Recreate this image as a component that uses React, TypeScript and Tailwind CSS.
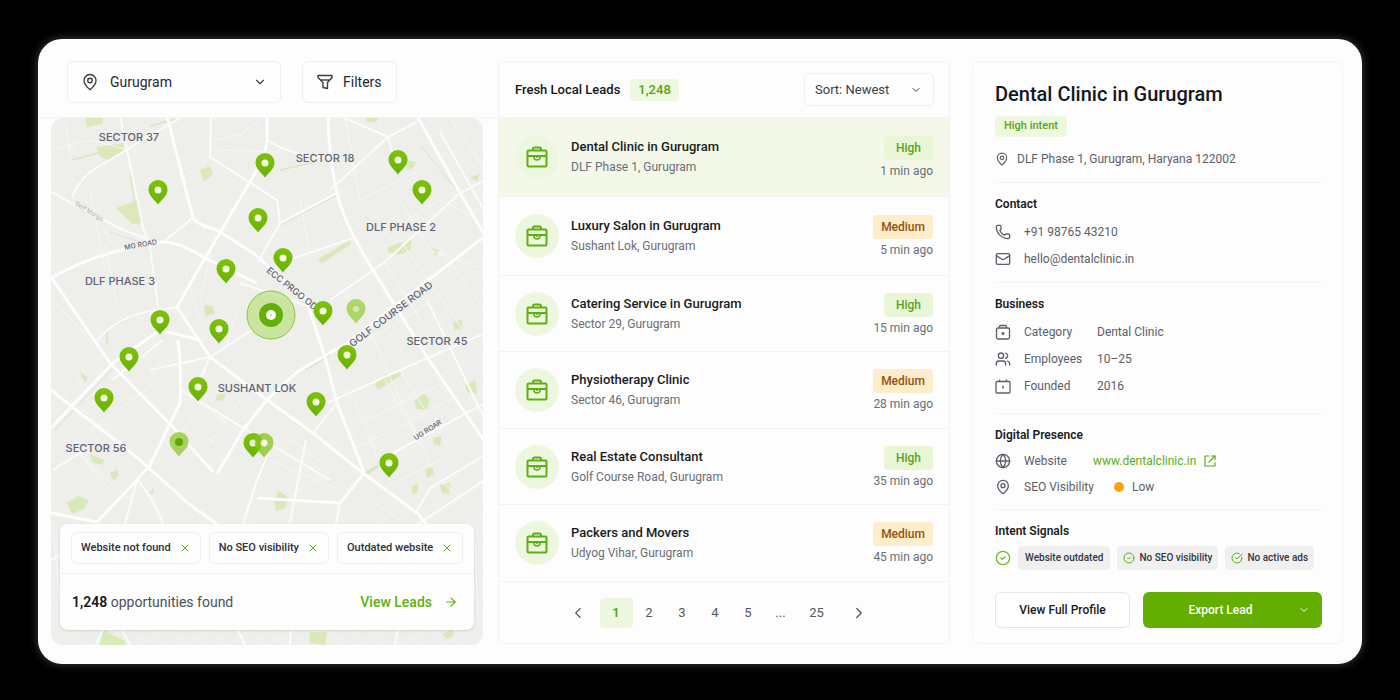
import React, { useState } from 'react';
import {
  ArrowRight,
  ChevronDown,
  ChevronLeft,
  ChevronRight,
  CircleCheck,
  CircleCheckBig,
  Globe,
  Mail,
  MapPin,
  Phone,
  Users,
  X,
} from 'lucide-react';

type Intent = 'High' | 'Medium';

interface Lead {
  name: string;
  place: string;
  intent: Intent;
  time: string;
}

const leads: Lead[] = [
  { name: 'Dental Clinic in Gurugram', place: 'DLF Phase 1, Gurugram', intent: 'High', time: '1 min ago' },
  { name: 'Luxury Salon in Gurugram', place: 'Sushant Lok, Gurugram', intent: 'Medium', time: '5 min ago' },
  { name: 'Catering Service in Gurugram', place: 'Sector 29, Gurugram', intent: 'High', time: '15 min ago' },
  { name: 'Physiotherapy Clinic', place: 'Sector 46, Gurugram', intent: 'Medium', time: '28 min ago' },
  { name: 'Real Estate Consultant', place: 'Golf Course Road, Gurugram', intent: 'High', time: '35 min ago' },
  { name: 'Packers and Movers', place: 'Udyog Vihar, Gurugram', intent: 'Medium', time: '45 min ago' },
];

const filters = ['Website not found', 'No SEO visibility', 'Outdated website'];

const majorRoads = [
  'M167 116 L193 218 Q196 224 217 230 L253 253 L306 299 L325 357 L337 403 L364 472',
  'M267 116 L267 140 Q266 152 258 168 L205 258 L177 307 L210 357 L267 400 L313 433 L363 473 L417 513 L440 540',
  'M51 278 Q100 250 163 242 Q180 242 203 257 L257 283',
  'M51 277 L110 363 L173 427 L213 472',
  'M51 428 L113 363 L160 330 L200 340',
  'M328 116 Q328 150 337 193 Q344 222 368 262 L427 357 L485 442',
  'M417 116 L460 193 L485 236',
  'M217 474 L243 430 L267 400 L297 372 L347 343 L485 236',
  'M51 513 L97 522 L137 480 L150 465 L180 403 Q182 370 178 340',
  'M51 390 L140 460 L190 505 L217 524',
  'M257 498 L340 503 L364 473',
];

const roads = [
  'M340 116 L388 137 L417 122',
  'M267 140 Q300 160 334 156',
  'M388 137 L394 160',
  'M258 262 L280 223 L337 193',
  'M280 223 L277 200 L210 157 L211 116',
  'M72 197 Q80 178 93 170 L183 116',
  'M51 192 L123 230 L150 240',
  'M120 116 L143 227 L150 247 L158 307',
  'M97 340 Q115 320 145 312 L177 307',
  'M327 403 L407 367 L485 333',
  'M393 453 L485 403',
  'M340 503 L336 524',
  'M417 511 L430 488 L485 455',
  'M270 450 L257 480 L243 524',
  'M306 440 L290 522',
  'M137 480 L125 524',
  'M137 480 Q155 500 163 524',
  'M330 480 L180 390',
  'M240 283 L320 310',
  'M163 340 L112 380',
  'M283 262 L353 238',
  'M210 357 L252 330',
  'M200 380 L210 357 L150 370',
  'M460 193 L485 180',
  'M193 218 L163 242',
  'M440 132 L485 212',
  'M388 137 L330 190',
  'M418 524 L485 480',
  'M313 433 L337 403',
  'M85 450 L53 470',
  'M460 193 L385 262 L330 300',
  'M427 300 L485 420',
  'M51 560 L120 524',
  'M96 645 L112 610 L130 645',
  'M228 610 L245 645',
  'M395 645 L400 620',
  'M290 645 L292 610',
];

const lanes = [
  'M51 150 L90 140 L130 150',
  'M65 118 L71 160',
  'M90 190 L105 270',
  'M105 245 L116 300',
  'M180 180 L220 150 L280 152',
  'M215 140 L240 135 L262 118',
  'M300 200 L310 255',
  'M345 118 L360 200',
  'M360 200 L420 170',
  'M375 240 L440 200 L470 215',
  'M385 262 L420 320',
  'M400 240 L470 340',
  'M330 360 L420 310',
  'M370 330 L400 400 L420 440',
  'M355 400 L378 460',
  'M385 380 L430 460',
  'M400 370 L450 450',
  'M345 430 L450 380',
  'M352 450 L460 395',
  'M70 400 L130 450',
  'M60 430 L110 490',
  'M90 430 L160 380',
  'M75 450 L130 500',
  'M195 400 L250 440',
  'M190 420 L240 470',
  'M205 450 L240 400',
  'M170 450 L210 390',
  'M280 430 L330 470',
  'M270 460 L340 490',
  'M380 490 L440 460',
  'M370 500 L400 520',
  'M440 480 L485 520',
  'M400 200 L430 250 L485 270',
  'M440 250 L485 310',
  'M450 118 L485 170',
  'M53 300 L90 340',
  'M53 350 L90 390',
  'M140 330 L180 370',
  'M240 300 L225 350',
  'M185 270 L200 320',
  'M215 235 L200 300',
  'M54 540 L60 600',
  'M475 540 L478 620',
];

// Parks and green strips
const parks = [
  'M85 118 L103 118 L102 124 L87 127 Z',
  'M96 147 L124 143 L122 152 L109 160 L99 156 Z',
  'M116 208 L137 200 L142 223 L132 224 Z',
  'M318 259 L350 240 L351 244 L322 263 Z',
  'M200 170 L210 166 L213 174 L204 182 Z',
  'M388 247 L400 243 L412 240 L410 250 L400 255 L388 252 Z',
  'M375 384 L385 375 L402 372 L400 376 L378 390 Z',
  'M414 401 L424 394 L430 400 L426 410 L416 409 Z',
  'M204 305 L213 306 L215 314 L205 316 Z',
  'M67 503 L78 496 L89 500 L84 509 L72 514 Z',
  'M90 454 L104 460 L102 465 L92 462 Z',
  'M110 473 L117 469 L119 476 L113 480 Z',
  'M274 500 L279 491 L289 498 L285 508 L276 511 Z',
  'M310 632 L327 632 L325 645 L309 643 Z',
  'M442 634 L452 630 L454 636 L447 639 Z',
  'M465 385 L475 380 L477 394 L467 392 Z',
  'M217 395 L226 393 L223 401 L216 400 Z',
  'M80 372 L88 378 L85 383 Z',
  'M453 322 L462 320 L463 329 L455 330 Z',
  'M412 486 L418 483 L418 492 L412 494 Z',
  'M425 470 L432 467 L434 475 L427 478 Z',
  'M440 485 L450 483 L449 494 L442 493 Z',
  'M433 438 L442 436 L440 446 L434 444 Z',
  'M365 118 L379 118 L376 122 L367 122 Z',
  'M470 178 L479 174 L478 182 Z',
  'M431 248 L439 250 L436 256 Z',
  'M148 495 L153 488 L154 492 Z',
  'M365 472 L378 464 L379 467 L367 475 Z',
  'M406 160 L416 162 L413 168 L407 170 Z',
  'M103 630 L125 641 L125 645 L100 645 Z',
];

const pins = [
  [265, 163], [398, 160], [422, 190], [158, 190], [258, 218], [226, 269], [283, 258],
  [160, 320], [219, 329], [323, 311], [347, 355], [129, 357], [104, 398], [198, 387],
  [316, 402], [253, 443], [389, 463],
];

const pinPath = 'M0 14.5 C-3 10 -9.500 6 -9.500 -0.500 A9.500 9.500 0 0 1 9.500 -0.500 C9.500 6 3 10 0 14.500 Z';

const areas = [
  { name: 'SECTOR 37', x: 129, y: 141 },
  { name: 'SECTOR 18', x: 325, y: 162 },
  { name: 'DLF PHASE 2', x: 401, y: 231 },
  { name: 'DLF PHASE 3', x: 120, y: 285 },
  { name: 'SECTOR 45', x: 437, y: 345 },
  { name: 'SUSHANT LOK', x: 257, y: 392 },
  { name: 'SECTOR 56', x: 96, y: 452 },
];

const CityMap = () => (
  <svg
    className="absolute inset-0 h-full w-full"
    viewBox="51 118 432 527"
    preserveAspectRatio="xMidYMid slice"
    role="img"
    aria-label="Map of Gurugram"
  >
    <defs>
      <linearGradient id="pin" x1="0" y1="0" x2="0" y2="1">
        <stop offset="0" stopColor="#7dc308" />
        <stop offset="1" stopColor="#6ab203" />
      </linearGradient>
      <pattern id="blocks" width="17" height="23" patternUnits="userSpaceOnUse" patternTransform="rotate(-32)">
        <path d="M0 0 H17 M0 0 V23" stroke="#fff" strokeWidth="1" fill="none" />
      </pattern>
    </defs>
    <rect x="51" y="118" width="432" height="527" fill="#eeeeeb" />
    <rect x="51" y="118" width="432" height="527" fill="url(#blocks)" opacity="0.25" />
    <g fill="#d5e8b0" opacity="0.85">
      {parks.map((d) => (
        <path key={d} d={d} />
      ))}
    </g>
    <g fill="none" stroke="#d9e8bf" strokeWidth="1.5">
      <path d="M72 160 L110 150 M130 172 L138 225 M107 345 L107 330 L133 316 M150 126 L180 118 M280 170 L316 162 M305 370 L330 355" />
    </g>
    <g fill="none" stroke="#dededb" strokeWidth="1">
      <path d="M281 225 L337 195 M332 160 L338 194 M110 232 L140 242 M420 145 L462 196 M55 430 L112 369" />
    </g>
    <g fill="none" stroke="#f7f7f6" strokeWidth="1" strokeLinejoin="round">
      {lanes.map((d) => (
        <path key={d} d={d} />
      ))}
    </g>
    <g fill="none" stroke="#fbfbfa" strokeWidth="2" strokeLinejoin="round">
      {roads.map((d) => (
        <path key={d} d={d} />
      ))}
    </g>
    <g fill="none" stroke="#fdfdfd" strokeWidth="3" strokeLinejoin="round">
      {majorRoads.map((d) => (
        <path key={d} d={d} />
      ))}
    </g>

    <g fontFamily="Inter, 'Liberation Sans', sans-serif" fontSize="11" fontWeight="500" fill="#5f6474" textAnchor="middle">
      {areas.map((a) => (
        <text key={a.name} x={a.x} y={a.y}>
          {a.name}
        </text>
      ))}
      <text transform="translate(393 317) rotate(-37)" fontSize="10">GOLF COURSE ROAD</text>
      <text transform="translate(290 291) rotate(39)" fontSize="9">ECC PRGO OD</text>
      <text transform="translate(141 247) rotate(-10)" fontSize="7">MG ROAD</text>
      <text transform="translate(429 432) rotate(-33)" fontSize="7">UG ROAR</text>
      <text transform="translate(88 213) rotate(31)" fontSize="6" fill="#b3b6ba">Golf Marga</text>
    </g>

    <g transform="translate(356 309)" opacity="0.8">
      <path d={pinPath} fill="#9ccf4a" />
      <circle r="3" fill="#cfe6a4" />
    </g>
    <g transform="translate(179 442)">
      <path d={pinPath} fill="#a6d35c" />
      <circle r="4" fill="#5fa60a" />
    </g>
    {pins.map(([x, y]) => (
      <g key={`${x}-${y}`} transform={`translate(${x} ${y})`}>
        <path d={pinPath} fill="url(#pin)" />
        <circle r="3.5" fill="#f4fae8" />
      </g>
    ))}
    <g transform="translate(264 443)" opacity="0.75">
      <path d={pinPath} fill="#86c51c" />
      <circle r="3.5" fill="#f4fae8" />
    </g>

    <circle cx="271" cy="315" r="24" fill="#b9e07a" fillOpacity="0.65" stroke="#8cc63f" />
    <circle cx="271" cy="315" r="12" fill="#62b009" />
    <circle cx="271" cy="315" r="5" fill="#fbfdf5" />
    <circle cx="271" cy="315" r="1" fill="#b9cf8a" />
  </svg>
);

const FunnelIcon = () => (
  <svg width="16" height="16" viewBox="0 0 16 16" fill="none" stroke="#3a3e45" strokeWidth="1.400" strokeLinejoin="round" aria-hidden="true">
    <path d="M1 1.500 H15 V3.500 L10.500 8.500 V14.500 L6 13.500 V8.500 L1 3.500 Z" />
    <path d="M3.500 6 H12.500" />
  </svg>
);

const BriefcaseIcon = () => (
  <svg width="22" height="22" viewBox="0 0 22 22" fill="none" stroke="#5cb012" strokeWidth="2" strokeLinejoin="round" aria-hidden="true">
    <rect x="1.500" y="4.500" width="19" height="16" rx="1" />
    <path d="M7 4.500 V3 Q7 1.500 8.500 1.500 H13.500 Q15 1.500 15 3 V4.500" />
    <path d="M1.500 10 H20.500" />
    <path d="M8 10 V11 A3 3 0 0 0 14 11 V10" strokeWidth="1.600" />
    <path d="M11 10 V12" strokeWidth="1.600" />
  </svg>
);

const CategoryIcon = () => (
  <svg width="16" height="16" viewBox="0 0 16 16" fill="none" stroke="currentColor" strokeWidth="1.300" strokeLinejoin="round" aria-hidden="true">
    <rect x="1.500" y="4" width="13" height="11" rx="1.500" />
    <path d="M4.500 4 V2.500 Q4.500 1.500 5.500 1.500 H10.500 Q11.500 1.500 11.500 2.500 V4" />
    <circle cx="8" cy="9.500" r="0.800" fill="currentColor" />
  </svg>
);

const FoundedIcon = () => (
  <svg width="16" height="16" viewBox="0 0 16 16" fill="none" stroke="currentColor" strokeWidth="1.300" strokeLinejoin="round" aria-hidden="true">
    <rect x="1" y="3.500" width="14" height="11.500" rx="1" />
    <path d="M4.500 1.500 V4 M11.500 1.500 V4" />
    <path d="M8 8 V10.500" strokeWidth="1.600" />
  </svg>
);

const OpenLinkIcon = () => (
  <svg width="12" height="12" viewBox="0 0 12 12" fill="none" stroke="currentColor" strokeWidth="1.200" strokeLinecap="round" strokeLinejoin="round" aria-hidden="true">
    <path d="M5 1 H1 V11 H11 V7.500" />
    <path d="M7.500 1 H11 V4.500" />
    <path d="M11 1 L5 7" />
  </svg>
);

const IntentBadge = ({ intent }: { intent: Intent }) => (
  <span
    className={`flex h-6 items-center rounded text-xs font-medium ${
      intent === 'High' ? 'bg-[#e8f6d6] px-3 text-[#58a416]' : 'bg-[#ffeccb] px-2 text-[#8f5410]'
    }`}
  >
    {intent}
  </span>
);

const MapPanel = () => {
  const [active, setActive] = useState(filters);

  return (
    <section className="flex flex-col">
      <div className="flex gap-[21px] border-b border-[#f4f4f5] pt-[22px] pb-[14px] pl-[29px]">
        <div className="relative flex h-[42px] w-[214px] items-center">
          <MapPin size={18} strokeWidth={1.8} className="pointer-events-none absolute left-[14px] text-[#3a3e45]" />
          <select
            aria-label="City"
            className="h-full w-full appearance-none rounded-md border border-[#efeff1] bg-[#fefefe] pl-[42px] text-sm text-[#25282e]"
          >
            <option>Gurugram</option>
            <option>Delhi</option>
            <option>Noida</option>
          </select>
          <ChevronDown size={14} className="pointer-events-none absolute right-[14px] text-[#3a3e45]" />
        </div>
        <button className="flex h-[42px] items-center gap-[10px] rounded-md border border-[#efeff1] bg-[#fefefe] px-[14px] text-sm text-[#25282e]">
          <FunnelIcon />
          Filters
        </button>
      </div>

      <div className="relative mr-[15px] mb-[19px] ml-[13px] flex flex-1 flex-col justify-end overflow-hidden rounded-xl px-[9px] pt-80 pb-[15px]">
        <CityMap />
        <div className="relative rounded-lg bg-[#fdfdfd] shadow-sm">
          <div className="flex gap-2 border-b border-[#f0f0f1] px-[11px] pt-2 pb-[9px]">
            {active.map((f) => (
              <span
                key={f}
                className="flex h-8 items-center gap-2 rounded-md border border-[#eeeef0] px-[9px] text-[11px] font-medium whitespace-nowrap text-[#2d3037]"
              >
                {f}
                <button aria-label={`Remove ${f}`} onClick={() => setActive(active.filter((a) => a !== f))}>
                  <X size={12} className="text-[#62b51a]" />
                </button>
              </span>
            ))}
          </div>
          <div className="flex h-14 items-center justify-between pr-4 pl-3">
            <p className="text-sm text-[#4b4f57]">
              <strong className="font-semibold text-[#15171c]">1,248</strong> opportunities found
            </p>
            <a href="#leads" className="flex items-center gap-3 text-sm font-medium text-[#5cb012]">
              View Leads
              <ArrowRight size={14} />
            </a>
          </div>
        </div>
      </div>
    </section>
  );
};

const LeadList = () => {
  const [page, setPage] = useState(1);

  return (
    <section id="leads" className="mt-[22px] mb-5 flex flex-col rounded-md border border-[#f4f4f5]">
      <div className="flex h-14 items-center border-b border-[#f4f4f5] pr-[15px] pl-4">
        <h2 className="text-[13px] font-medium text-[#15171c]">Fresh Local Leads</h2>
        <span className="ml-[10px] flex h-[22px] items-center rounded bg-[#edf8df] px-2 text-[13px] font-medium text-[#58a416]">1,248</span>
        <div className="relative ml-auto flex h-[33px] w-[130px] items-center">
          <select
            aria-label="Sort leads"
            className="h-full w-full appearance-none rounded-md border border-[#eeeef0] bg-[#fefefe] pl-[10px] text-[13px] text-[#3a3e45]"
          >
            <option>Sort: Newest</option>
            <option>Sort: Oldest</option>
          </select>
          <ChevronDown size={12} className="pointer-events-none absolute right-3 text-[#3a3e45]" />
        </div>
      </div>

      <ul className="flex flex-1 flex-col">
        {leads.map((lead, i) => (
          <li
            key={lead.name}
            className={`flex items-center border-b border-[#f3f3f4] py-2 pr-4 pl-4 ${i < 2 ? 'flex-[79]' : 'flex-[76]'} ${
              i === 0 ? 'bg-[#f3f8e9]' : ''
            }`}
          >
            <span className="flex h-11 w-11 shrink-0 items-center justify-center rounded-full bg-[#edf7df]">
              <BriefcaseIcon />
            </span>
            <div className="ml-3 min-w-0 flex-1">
              <h3 className="text-[13px] leading-[21px] font-medium text-[#191b20]">{lead.name}</h3>
              <p className="text-xs leading-[21px] text-[#6a6e76]">{lead.place}</p>
            </div>
            <div className="flex flex-col items-end pt-1">
              <IntentBadge intent={lead.intent} />
              <span className="text-xs leading-[22px] text-[#6a6e76]">{lead.time}</span>
            </div>
          </li>
        ))}
      </ul>

      <nav aria-label="Pages" className="flex h-[61px] items-center justify-center pr-3 text-[13px] text-[#54585f]">
        <button aria-label="Previous page" className="flex w-11 justify-center" onClick={() => setPage(Math.max(1, page - 1))}>
          <ChevronLeft size={18} strokeWidth={1.5} />
        </button>
        {[1, 2, 3, 4, 5].map((n) => (
          <button
            key={n}
            onClick={() => setPage(n)}
            className={`h-[30px] w-[33px] rounded ${page === n ? 'bg-[#edf7df] font-semibold text-[#58a416]' : ''}`}
          >
            {n}
          </button>
        ))}
        <span className="w-8 text-center">...</span>
        <button className="w-10" onClick={() => setPage(25)}>25</button>
        <button aria-label="Next page" className="flex w-11 justify-center" onClick={() => setPage(page + 1)}>
          <ChevronRight size={18} strokeWidth={1.8} />
        </button>
      </nav>
    </section>
  );
};

interface SectionProps {
  title: string;
  className?: string;
  children: React.ReactNode;
}

const DetailSection = ({ title, className = '', children }: SectionProps) => (
  <section className={`border-t border-[#f2f2f3] pt-[11px] ${className}`}>
    <h3 className="text-xs leading-5 font-semibold text-[#191b20]">{title}</h3>
    {children}
  </section>
);

const LeadDetails = () => (
  <aside className="mt-[22px] mr-[19px] mb-5 ml-[22px] flex flex-col rounded-md border border-[#f4f4f5] pt-[18px] pr-5 pb-[15px] pl-[22px] text-xs text-[#5c6068]">
    <h1 className="text-xl leading-7 font-medium text-[#15171f]">Dental Clinic in Gurugram</h1>
    <span className="mt-2 flex h-[21px] items-center self-start rounded bg-[#edf8df] px-[9px] text-[11px] font-medium text-[#58a416]">
      High intent
    </span>
    <p className="mt-3 mb-[13px] flex h-5 items-center gap-2 text-xs">
      <MapPin size={14} />
      DLF Phase 1, Gurugram, Haryana 122002
    </p>

    <DetailSection title="Contact" className="pb-[10px]">
      <ul className="mt-1">
        <li className="flex h-[27px] items-center gap-[13px]">
          <Phone size={16} />
          +91 98765 43210
        </li>
        <li className="flex h-[27px] items-center gap-[13px]">
          <Mail size={16} />
          hello@dentalclinic.in
        </li>
      </ul>
    </DetailSection>

    <DetailSection title="Business" className="pb-[14px]">
      <dl className="mt-1">
        <div className="flex h-[27px] items-center">
          <CategoryIcon />
          <dt className="ml-[13px] w-[73px]">Category</dt>
          <dd>Dental Clinic</dd>
        </div>
        <div className="flex h-[27px] items-center">
          <Users size={16} />
          <dt className="ml-[13px] w-[73px]">Employees</dt>
          <dd>10–25</dd>
        </div>
        <div className="flex h-[27px] items-center">
          <FoundedIcon />
          <dt className="ml-[13px] w-[73px]">Founded</dt>
          <dd>2016</dd>
        </div>
      </dl>
    </DetailSection>

    <DetailSection title="Digital Presence" className="pb-[9px]">
      <dl className="mt-[3px]">
        <div className="flex h-[26px] items-center">
          <Globe size={16} />
          <dt className="ml-[13px] w-[69px]">Website</dt>
          <dd>
            <a href="#website" className="flex items-center gap-2 text-[#5cb012]">
              www.dentalclinic.in
              <OpenLinkIcon />
            </a>
          </dd>
        </div>
        <div className="flex h-[26px] items-center">
          <MapPin size={16} />
          <dt className="ml-[13px] w-[90px]">SEO Visibility</dt>
          <dd className="flex items-center gap-2">
            <span className="h-[10px] w-[10px] rounded-full bg-[#f9a10e]" />
            Low
          </dd>
        </div>
      </dl>
    </DetailSection>

    <DetailSection title="Intent Signals">
      <div className="mt-[5px] flex items-center gap-[7px] text-[10px] font-medium whitespace-nowrap text-[#33363d]">
        <CircleCheck size={16} className="shrink-0 text-[#6abf2b]" />
        <span className="flex h-6 items-center rounded bg-[#f0f0f1] px-[7px]">Website outdated</span>
        <span className="flex h-6 items-center gap-1 rounded bg-[#f0f0f1] px-[6px]">
          <CircleCheck size={12} className="text-[#5cb012]" />
          No SEO visibility
        </span>
        <span className="flex h-6 items-center gap-1 rounded bg-[#f0f0f1] px-[6px]">
          <CircleCheckBig size={12} className="text-[#5cb012]" />
          No active ads
        </span>
      </div>
    </DetailSection>

    <div className="mt-auto grid grid-cols-[135fr_179fr] gap-[13px] pt-5">
      <button className="h-9 rounded-md border border-[#e6e6e8] bg-white text-xs font-medium text-[#191b20]">
        View Full Profile
      </button>
      <button className="flex h-9 items-center rounded-md bg-[#63ae00] pr-3 text-xs font-medium text-white">
        <span className="flex-1 text-center">Export Lead</span>
        <ChevronDown size={12} />
      </button>
    </div>
  </aside>
);

const App = () => (
  <div className="min-h-screen bg-black px-[38px] pt-[39px] pb-9 font-[Roboto,'Liberation_Sans',sans-serif]">
    <main className="grid min-h-[calc(100vh-75px)] grid-cols-[minmax(0,460fr)_minmax(0,452fr)_minmax(0,412fr)] rounded-[24px] bg-[#fdfdfd] shadow-[0_0_10px_rgba(255,255,255,0.25)]">
      <MapPanel />
      <LeadList />
      <LeadDetails />
    </main>
  </div>
);

export default App;
